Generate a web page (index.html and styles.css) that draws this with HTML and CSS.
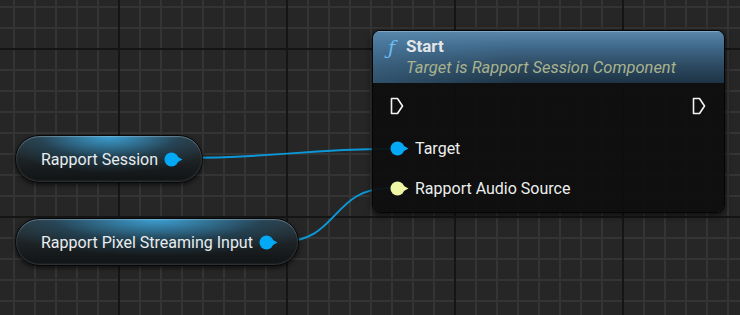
FILE: index.html
```html
<!DOCTYPE html>
<html lang="en">
<head>
<meta charset="UTF-8">
<meta name="viewport" content="width=device-width, initial-scale=1.0">
<title>Blueprint - Start</title>
<link rel="stylesheet" href="styles.css">
</head>
<body>
<div class="graph">
    <!-- wires sit under the nodes -->
    <svg class="wires" width="740" height="315" viewBox="0 0 740 315">
        <path class="wire" d="M182 158 C 280 158, 300 149, 391 149"/>
        <path class="wire" d="M280 242 C 340 242, 330 188, 391 188"/>
    </svg>

    <div class="pill pill-session">
        <span class="pill-label">Rapport Session</span>
        <svg class="pin" width="19" height="15" viewBox="0 0 19 15"><circle cx="7.5" cy="7.5" r="7" fill="#03a9f4"/><polygon points="13,4.5 18.5,7.5 13,10.5" fill="#03a9f4"/></svg>
    </div>

    <div class="pill pill-stream">
        <span class="pill-label">Rapport Pixel Streaming Input</span>
        <svg class="pin" width="19" height="15" viewBox="0 0 19 15"><circle cx="7.5" cy="7.5" r="7" fill="#03a9f4"/><polygon points="13,4.5 18.5,7.5 13,10.5" fill="#03a9f4"/></svg>
    </div>

    <div class="node node-start">
        <div class="node-header">
            <span class="func-icon">ƒ</span>
            <div class="node-titles">
                <div class="node-title">Start</div>
                <div class="node-sub">Target is Rapport Session Component</div>
            </div>
        </div>
        <div class="node-body">
            <div class="row row-exec">
                <svg class="exec" width="14" height="18" viewBox="0 0 14 18"><path d="M1.5 1.5 H7.5 L12.5 9 L7.5 16.5 H1.5 Z"/></svg>
                <svg class="exec" width="14" height="18" viewBox="0 0 14 18"><path d="M1.5 1.5 H7.5 L12.5 9 L7.5 16.5 H1.5 Z"/></svg>
            </div>
            <div class="row">
                <svg class="pin" width="19" height="15" viewBox="0 0 19 15"><circle cx="7.5" cy="7.5" r="7" fill="#03a9f4"/><polygon points="13,4.5 18.5,7.5 13,10.5" fill="#03a9f4"/></svg>
                <span class="pin-label">Target</span>
            </div>
            <div class="row">
                <svg class="pin" width="19" height="15" viewBox="0 0 19 15"><circle cx="7.5" cy="7.5" r="7" fill="#eef5a4"/><polygon points="13,4.5 18.5,7.5 13,10.5" fill="#eef5a4"/></svg>
                <span class="pin-label">Rapport Audio Source</span>
            </div>
        </div>
    </div>
</div>
</body>
</html>
```

FILE: styles.css
```css
body {
    margin: 0;
    padding: 0;
    font-family: Roboto, "Liberation Sans", sans-serif;
    background-color: #262626;
    background-image:
        linear-gradient(to right, #151515 2px, transparent 2px),
        linear-gradient(to bottom, #151515 2px, transparent 2px),
        linear-gradient(to right, #343434 2px, transparent 2px),
        linear-gradient(to bottom, #343434 2px, transparent 2px);
    background-size: 168px 100%, 100% 168px, 21px 100%, 100% 21px;
    background-position: 118px 0, 0 48px, 13px 0, 0 6px;
}

.graph {
    position: relative;
    width: 740px;
    height: 315px;
    overflow: hidden;
}

.wires {
    position: absolute;
    left: 0;
    top: 0;
}

.wire {
    fill: none;
    stroke: #0c98d8;
    stroke-width: 2;
}

/* variable getter pills */
.pill {
    position: absolute;
    left: 15px;
    height: 48px;
    box-sizing: border-box;
    display: flex;
    align-items: center;
    gap: 6px;
    padding: 0 17px 0 25px;
    border: 1px solid #070808;
    border-radius: 24px;
    background:
        radial-gradient(ellipse 62% 80% at 50% 0%, rgba(60, 165, 220, 0.95), rgba(32, 95, 130, 0.4) 60%, transparent 100%),
        linear-gradient(to bottom, #30363a 0%, #1c2123 55%, #111314 100%);
    box-shadow: inset 0 1px 1px rgba(200, 220, 235, 0.35), inset 0 -1px 2px rgba(120, 130, 140, 0.35), 0 2px 4px rgba(0, 0, 0, 0.6);
}

.pill-session {
    top: 135px;
    width: 188px;
}

.pill-stream {
    top: 218px;
    width: 284px;
}

.pill-label {
    color: #e9ecee;
    font-size: 16px;
    white-space: nowrap;
}

.pin {
    flex: none;
}

/* function node */
.node {
    position: absolute;
    box-sizing: border-box;
    border: 1px solid #050505;
    border-radius: 8px;
    overflow: hidden;
    box-shadow: 0 2px 6px rgba(0, 0, 0, 0.7);
}

.node-start {
    left: 372px;
    top: 30px;
    width: 353px;
    height: 183px;
}

.node-header {
    box-sizing: border-box;
    height: 52px;
    display: flex;
    align-items: flex-start;
    gap: 11px;
    padding: 4px 14px 0 15px;
    background:
        linear-gradient(to right, rgba(80, 135, 175, 0.35) 0%, transparent 40%),
        linear-gradient(to bottom, #5a87ab 0%, #41698a 30%, #2b475e 70%, #1e3446 100%);
    box-shadow: inset 0 1px 0 rgba(150, 190, 220, 0.6);
}

.func-icon {
    font-family: "DejaVu Serif", serif;
    font-style: italic;
    font-size: 19px;
    color: #6fbcf0;
    margin-top: 1px;
}

.node-title {
    color: #e4e6e8;
    font-size: 17px;
    font-weight: bold;
    line-height: 22px;
}

.node-sub {
    color: #a9b38e;
    font-size: 16.5px;
    font-style: italic;
    line-height: 20px;
    margin-top: 1px;
    white-space: nowrap;
}

.node-body {
    height: 130px;
    padding: 3px 18px 0 17px;
    background: rgba(13, 14, 13, 0.93);
}

.row {
    height: 40px;
    display: flex;
    align-items: center;
    gap: 6px;
}

.row-exec {
    justify-content: space-between;
    margin-bottom: 2px;
}

.exec path {
    fill: none;
    stroke: #f2f2f2;
    stroke-width: 1.6;
    stroke-linejoin: round;
}

.pin-label {
    color: #eceeee;
    font-size: 16px;
}
```
